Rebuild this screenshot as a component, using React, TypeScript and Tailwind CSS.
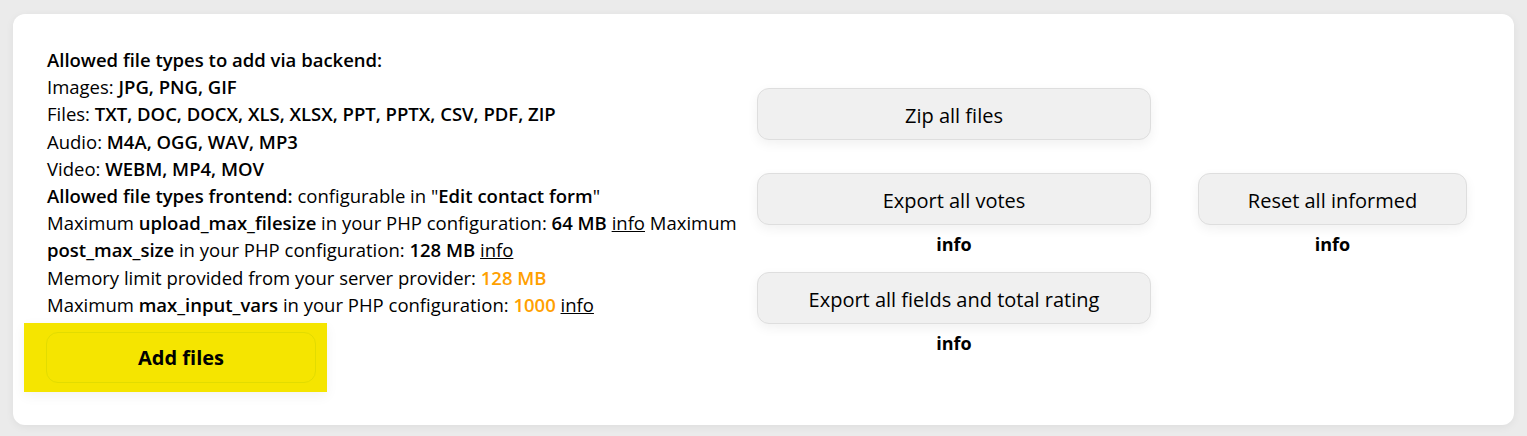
export default function App() {
  return (
    <div className="min-h-screen bg-[#ebebeb] px-[13px] pt-[14px] pb-[14px]" style={{ fontFamily: '"Open Sans", "Noto Sans", sans-serif' }}>
      <div className="flex rounded-xl bg-white pl-[34px] pr-[34px] pt-[32px] pb-[33px] shadow-[0_2px_8px_rgba(0,0,0,0.06)] text-black">
        {/* Left: info text */}
        <div className="w-[700px] shrink-0">
          <div className="text-[18.5px] leading-[27.2px]">
            <div className="font-semibold">Allowed file types to add via backend:</div>
            <div>Images: <span className="font-semibold">JPG, PNG, GIF</span></div>
            <div>Files: <span className="font-semibold">TXT, DOC, DOCX, XLS, XLSX, PPT, PPTX, CSV, PDF, ZIP</span></div>
            <div>Audio: <span className="font-semibold">M4A, OGG, WAV, MP3</span></div>
            <div>Video: <span className="font-semibold">WEBM, MP4, MOV</span></div>
            <div>
              <span className="font-semibold">Allowed file types frontend:</span> configurable in "<span className="font-semibold">Edit contact form</span>"
            </div>
            <div>
              Maximum <span className="font-semibold">upload_max_filesize</span> in your PHP configuration: <span className="font-semibold">64 MB</span>{' '}
              <a className="font-medium underline">info</a> Maximum <span className="font-semibold">post_max_size</span> in your PHP configuration:{' '}
              <span className="font-semibold">128 MB</span> <a className="font-medium underline">info</a>
            </div>
            <div>
              Memory limit provided from your server provider: <span className="font-semibold text-[#ffa000]">128 MB</span>
            </div>
            <div>
              Maximum <span className="font-semibold">max_input_vars</span> in your PHP configuration:{' '}
              <span className="font-semibold text-[#ffa000]">1000</span> <a className="font-medium underline">info</a>
            </div>
          </div>
          <div className="-ml-[23px] mt-[5px] w-[303px] bg-[#f5e500] py-[9px] pl-[22px] pr-[11px] shadow-[0_4px_12px_rgba(0,0,0,0.05)]">
            <button className="flex h-[51px] w-full items-center justify-center rounded-xl border border-[#e2dc00] text-[20px] font-bold">
              Add files
            </button>
          </div>
        </div>

        {/* Right: action buttons */}
        <div className="ml-[10px] mt-[42px] grid grid-cols-[394px_269px] gap-x-[47px] content-start">
          <button className="col-start-1 flex h-[52px] items-center justify-center rounded-xl border border-[#dedede] bg-[#f0f0f0] pt-[3px] text-[20px] shadow-[0_4px_12px_rgba(0,0,0,0.06)]">
            Zip all files
          </button>
          <div />
          <div className="mt-[33px] flex flex-col items-center">
            <button className="flex h-[52px] w-full items-center justify-center rounded-xl border border-[#dedede] bg-[#f0f0f0] pt-[3px] text-[20px] shadow-[0_4px_12px_rgba(0,0,0,0.06)]">
              Export all votes
            </button>
            <div className="mt-[4px] text-[18px] font-bold leading-[30px]">info</div>
          </div>
          <div className="mt-[33px] flex flex-col items-center">
            <button className="flex h-[52px] w-full items-center justify-center rounded-xl border border-[#dedede] bg-[#f0f0f0] pt-[3px] text-[20px] shadow-[0_4px_12px_rgba(0,0,0,0.06)]">
              Reset all informed
            </button>
            <div className="mt-[4px] text-[18px] font-bold leading-[30px]">info</div>
          </div>
          <div className="mt-[13px] flex flex-col items-center">
            <button className="flex h-[52px] w-full items-center justify-center rounded-xl border border-[#dedede] bg-[#f0f0f0] pt-[3px] text-[20px] shadow-[0_4px_12px_rgba(0,0,0,0.06)]">
              Export all fields and total rating
            </button>
            <div className="mt-[4px] text-[18px] font-bold leading-[30px]">info</div>
          </div>
        </div>
      </div>
    </div>
  )
}
